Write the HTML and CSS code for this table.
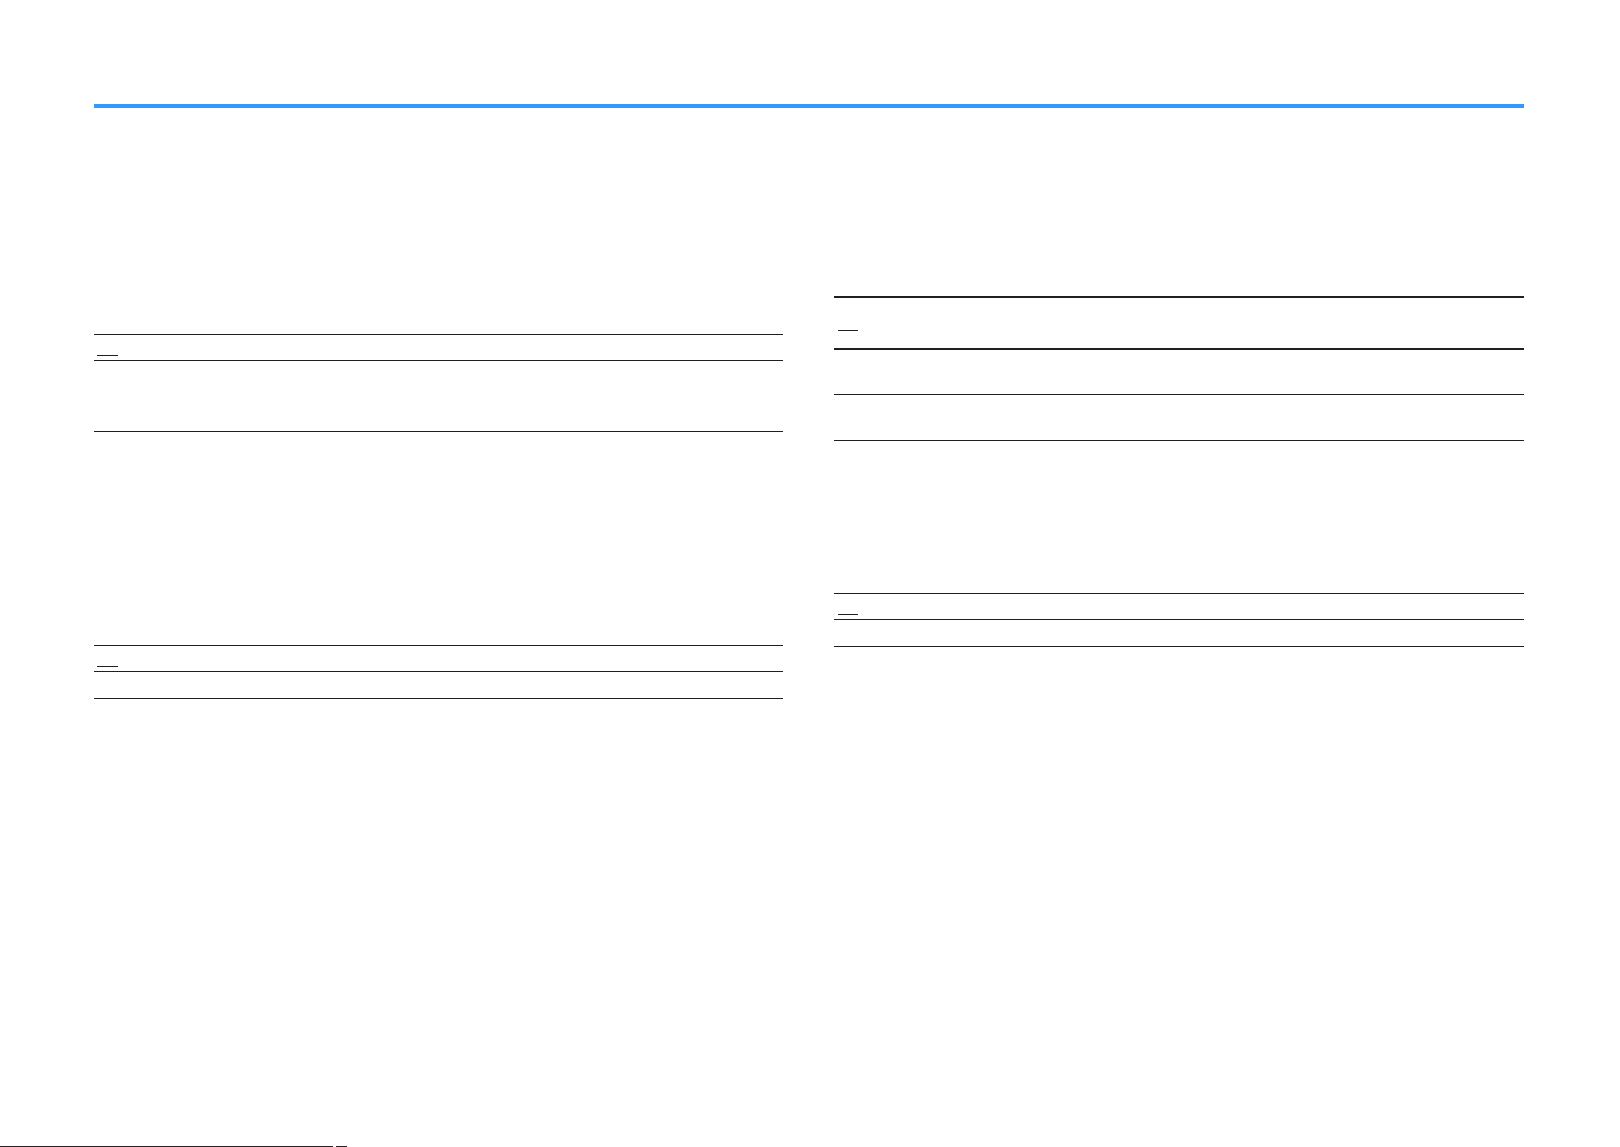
FILE: index.html
```html
<!DOCTYPE html>
<html lang="en">
<head>
<meta charset="utf-8">
<title>Page</title>
<link rel="stylesheet" href="styles.css">
</head>
<body>
<div class="page">
  <div class="content">
    <div class="rule"></div>
    <div class="columns">
      <div class="col col-left">
        <div class="tbl tbl-l1">
          <div class="thead"><span class="mark"></span></div>
          <div class="row row-l1"></div>
        </div>
        <div class="tbl tbl-l2">
          <div class="thead"><span class="mark"></span></div>
          <div class="row row-l2"></div>
        </div>
      </div>
      <div class="col col-right">
        <div class="tbl tbl-r1">
          <div class="thead thick"><span class="mark mark-r"></span></div>
          <div class="row row-r1"></div>
          <div class="row row-r2"></div>
        </div>
        <div class="tbl tbl-r2">
          <div class="thead"><span class="mark mark-r"></span></div>
          <div class="row row-l2"></div>
        </div>
      </div>
    </div>
  </div>
  <div class="footer">
    <div class="foot-line"></div>
    <div class="foot-mark"></div>
  </div>
</div>
</body>
</html>
```

FILE: styles.css
```css
html, body {
  margin: 0;
  padding: 0;
  background: #ffffff;
  font-family: "Liberation Sans", Arial, sans-serif;
}
.page {
  height: 1147px;
  display: flex;
  flex-direction: column;
  overflow: hidden;
}
.content {
  padding: 104px 96px 0 94px;
}
.rule {
  height: 4px;
  background: #3399ff;
}
.columns {
  display: flex;
  gap: 51px;
}
.col-left {
  width: 689px;
}
.col-right {
  flex: 1;
}
.tbl-l1 { margin-top: 226px; }
.tbl-l2 { margin-top: 213px; }
.tbl-r1 { margin-top: 188px; }
.tbl-r2 { margin-top: 152px; }

.thead {
  border-top: 1px solid #231f20;
  border-bottom: 1px solid #231f20;
  height: 25px;
  box-sizing: content-box;
}
.thead.thick {
  border-top-width: 2px;
  border-bottom-width: 2px;
  height: 50px;
}
.mark {
  display: block;
  width: 21px;
  height: 1px;
  background: #231f20;
  margin: 20px 0 0 3px;
}
.thick .mark {
  margin-top: 32px;
}
.mark-r {
  width: 20px;
  margin-left: 4px;
}
.row {
  border-bottom: 1px solid #231f20;
}
.row-l1 { height: 70px; }
.row-l2 { height: 26px; }
.row-r1 { height: 44px; }
.row-r2 { height: 45px; }

.footer {
  margin-top: auto;
  display: flex;
  align-items: flex-end;
  gap: 3px;
}
.foot-line {
  width: 333px;
  height: 1px;
  background: #231f20;
}
.foot-mark {
  width: 11px;
  height: 1px;
  background: #231f20;
}
```
